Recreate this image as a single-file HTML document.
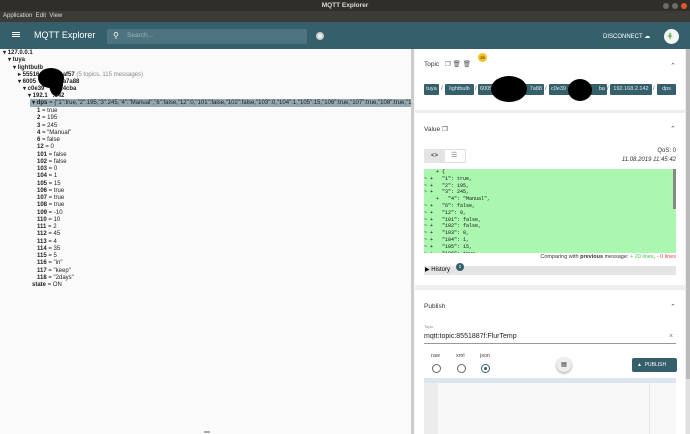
<!DOCTYPE html><html><head><style>
*{margin:0;padding:0;box-sizing:border-box}
body{width:690px;height:434px;overflow:hidden;font-family:"Liberation Sans",sans-serif;background:#fafafa;position:relative}
.a{position:absolute}
.tree div{position:absolute;font-size:6px;color:#222;white-space:nowrap;line-height:7px}
.tree b{font-weight:bold}
.chip{position:absolute;top:84px;height:11px;background:#35606b;color:#dfe8ea;font-size:5.5px;line-height:11px;text-align:center;border-radius:1px;white-space:nowrap;overflow:hidden}
.sep{position:absolute;top:86px;font-size:6px;color:#555}
.diff div{font-family:"Liberation Mono",monospace;font-size:5px;line-height:6.8px;color:#111;white-space:pre;height:6.8px}
</style></head><body>
<div class="a" style="left:0;top:0;width:690px;height:11px;background:#2f2e2b"></div>
<div class="a" style="left:0;top:2px;width:690px;text-align:center;font-size:6.5px;font-weight:bold;color:#dddad5">MQTT Explorer</div>
<div class="a" style="left:663px;top:3px;width:6px;height:6px;border-radius:50%;background:#6d6b66"></div>
<div class="a" style="left:672px;top:3px;width:6px;height:6px;border-radius:50%;background:#6d6b66"></div>
<div class="a" style="left:681px;top:3px;width:6px;height:6px;border-radius:50%;background:#e0562a"></div>
<div class="a" style="left:0;top:11px;width:690px;height:11px;background:#3c3b37"></div>
<div class="a" style="left:3px;top:13px;font-size:6px;color:#ddd">Application&nbsp; Edit&nbsp; View</div>
<div class="a" style="left:0;top:22px;width:690px;height:27px;background:#35606b"></div>
<div class="a" style="left:12px;top:32px;width:8px;height:1px;background:#fff;box-shadow:0 2px 0 #fff,0 4px 0 #fff"></div>
<div class="a" style="left:34px;top:30px;font-size:9px;color:#fff">MQTT Explorer</div>
<div class="a" style="left:107px;top:29px;width:200px;height:15px;background:#4d747e;border-radius:2px"></div>
<div class="a" style="left:113px;top:31px;font-size:8px;color:#fff">&#9906;</div>
<div class="a" style="left:127px;top:32px;font-size:6.5px;color:#9db3b9">Search...</div>
<div class="a" style="left:316px;top:32px;width:8px;height:8px;border-radius:50%;background:#eee;border:2px solid #ccc"></div>
<div class="a" style="left:603px;top:33px;font-size:6px;color:#fff">DISCONNECT &#9729;</div>
<div class="a" style="left:664px;top:29px;width:15px;height:15px;border-radius:50%;background:#f5f5f5"></div>
<div class="a" style="left:667px;top:32px;font-size:7px;color:#3a3">&#8917;</div>
<div class="a" style="left:411px;top:49px;width:3px;height:385px;background:#ccc"></div>
<div class="a" style="left:30px;top:99px;width:381px;height:8px;background:#94a9b1"></div>
<div class="tree">
<div style="left:3px;top:50px"><b>▾ 127.0.0.1</b></div>
<div style="left:8px;top:57px"><b>▾ tuya</b></div>
<div style="left:13px;top:65px"><b>▾ lightbulb</b></div>
<div style="left:18px;top:72px"><b>▸ 55516</b>&nbsp;&nbsp;&nbsp;&nbsp;&nbsp;&nbsp;&nbsp;&nbsp;&nbsp;&nbsp;<b>2eaf57</b> <span style="color:#888">(5 topics, 115 messages)</span></div>
<div style="left:18px;top:79px"><b>▾ 6005</b>&nbsp;&nbsp;&nbsp;&nbsp;&nbsp;&nbsp;&nbsp;&nbsp;&nbsp;&nbsp;<b>e31a7a88</b></div>
<div style="left:23px;top:86px"><b>▾ c0e39</b>&nbsp;&nbsp;&nbsp;&nbsp;&nbsp;&nbsp;&nbsp;<b>824cba</b></div>
<div style="left:28px;top:93px"><b>▾ 192.1</b>&nbsp;&nbsp;&nbsp;<b>.142</b></div>
<div style="left:32px;top:100px"><b>▾ dps</b> = {"1":true,"2":195,"3":245,"4":"Manual","6":false,"12":0,"101":false,"102":false,"103":0,"104":1,"105":15,"106":true,"107":true,"108":true,"1</div>
</div>
<div class="tree" id="kv"></div>
<div class="a" style="left:38px;top:68px;width:26px;height:20px;border-radius:50%;background:#000"></div>
<div class="a" style="left:49px;top:70px;width:14px;height:26px;border-radius:50%;background:#000"></div>
<div class="a" style="left:415px;top:49px;width:275px;height:385px;background:#eee"></div>
<div class="a" style="left:415px;top:49px;width:270px;height:61px;background:#fff"></div>
<div class="a" style="left:424px;top:61px;font-size:6.5px;color:#333">Topic</div>
<div class="a" style="left:445px;top:60px;font-size:6.5px;color:#555">&#10064; &#128465; &#128465;</div>
<div class="a" style="left:478px;top:53px;width:9px;height:9px;border-radius:50%;background:#f6bf26;font-size:4px;text-align:center;line-height:9px">25</div>
<div class="a" style="left:670px;top:62px;font-size:7px;color:#555">&#8963;</div>
<div class="chip" style="left:424px;width:15px">tuya</div><div class="sep" style="left:441px">/</div>
<div class="chip" style="left:445px;width:29px">lightbulb</div><div class="sep" style="left:475px">/</div>
<div class="chip" style="left:478px;width:66px;text-align:left;padding-left:2px">6005<span style="position:absolute;right:2px">7a88</span></div><div class="sep" style="left:545px">/</div>
<div class="chip" style="left:549px;width:58px;text-align:left;padding-left:2px">c0e39<span style="position:absolute;right:2px">ba</span></div><div class="sep" style="left:607px">/</div>
<div class="chip" style="left:610px;width:42px">192.168.2.142</div><div class="sep" style="left:653px">/</div>
<div class="chip" style="left:657px;width:19px">dps</div>
<div class="a" style="left:491px;top:76px;width:36px;height:26px;border-radius:50%;background:#000"></div>
<div class="a" style="left:568px;top:79px;width:24px;height:22px;border-radius:50%;background:#000"></div>
<div class="a" style="left:415px;top:113px;width:270px;height:172px;background:#fff"></div>
<div class="a" style="left:424px;top:125px;font-size:6.5px;color:#333">Value &#10064;</div>
<div class="a" style="left:670px;top:125px;font-size:7px;color:#555">&#8963;</div>
<div class="a" style="left:424px;top:149px;width:42px;height:14px;border:1px solid #ddd;border-radius:2px"></div>
<div class="a" style="left:424px;top:149px;width:21px;height:14px;background:#e4e4e4;font-size:6px;text-align:center;line-height:14px">&lt;&gt;</div>
<div class="a" style="left:451px;top:149px;font-size:7px;color:#777;line-height:14px">&#9776;</div>
<div class="a" style="left:600px;top:148px;width:76px;text-align:right;font-size:6px;color:#333">QoS: 0</div>
<div class="a" style="left:580px;top:157px;width:96px;text-align:right;font-size:6px;color:#333;font-style:italic">11.08.2019 11:45:42</div>
<div class="a diff" style="left:424px;top:169px;width:252px;height:84px;background:#abf7b0;overflow:hidden">
<div>    + {</div><div>~ +   "1": true,</div><div>~ +   "2": 195,</div><div>~ +   "3": 245,</div><div>    +   "4": "Manual",</div><div>~ +   "6": false,</div><div>~ +   "12": 0,</div><div>~ +   "101": false,</div><div>~ +   "102": false,</div><div>~ +   "103": 0,</div><div>~ +   "104": 1,</div><div>~ +   "105": 15,</div><div>~ +   "106": true,</div>
</div>
<div class="a" style="left:673px;top:169px;width:3px;height:40px;background:#888"></div>
<div class="a" style="left:480px;top:254px;width:196px;text-align:right;font-size:5.5px;color:#333">Comparing with <b>previous</b> message: <span style="color:#4c4">+ 20 lines</span>, <span style="color:#e44">- 0 lines</span></div>
<div class="a" style="left:424px;top:266px;width:252px;height:9px;background:#e4e4e4;font-size:6px;line-height:9px;padding-left:1px">▶ History</div>
<div class="a" style="left:456px;top:263px;width:8px;height:8px;border-radius:50%;background:#35606b;color:#fff;font-size:4.5px;text-align:center;line-height:8px">2</div>
<div class="a" style="left:415px;top:290px;width:270px;height:144px;background:#fff"></div>
<div class="a" style="left:424px;top:303px;font-size:6.5px;color:#333">Publish</div>
<div class="a" style="left:670px;top:303px;font-size:7px;color:#555">&#8963;</div>
<div class="a" style="left:424px;top:324px;font-size:4px;color:#888">Topic</div>
<div class="a" style="left:424px;top:333px;font-size:7px;color:#222">mqtt:topic:8551887f:FlurTemp</div>
<div class="a" style="left:669px;top:333px;font-size:7px;color:#777">×</div>
<div class="a" style="left:424px;top:343px;width:252px;height:1px;background:#999"></div>
<div class="a" style="left:431px;top:353px;font-size:5.5px;color:#444">raw</div>
<div class="a" style="left:456px;top:353px;font-size:5.5px;color:#444">xml</div>
<div class="a" style="left:480px;top:353px;font-size:5.5px;color:#444">json</div>
<div class="a" style="left:432px;top:364px;width:9px;height:9px;border-radius:50%;border:1px solid #666"></div>
<div class="a" style="left:457px;top:364px;width:9px;height:9px;border-radius:50%;border:1px solid #666"></div>
<div class="a" style="left:481px;top:364px;width:9px;height:9px;border-radius:50%;border:1px solid #35606b"></div>
<div class="a" style="left:484px;top:367px;width:3px;height:3px;border-radius:50%;background:#35606b"></div>
<div class="a" style="left:557px;top:358px;width:14px;height:14px;border-radius:50%;background:#eee;box-shadow:0 1px 3px #999;font-size:6px;text-align:center;line-height:14px">&#9636;</div>
<div class="a" style="left:632px;top:358px;width:45px;height:14px;background:#35606b;border-radius:2px;color:#fff;font-size:5px;line-height:14px;padding-left:5px">▲ &nbsp;PUBLISH</div>
<div class="a" style="left:424px;top:378px;width:252px;height:56px;background:#f8f8f8"></div>
<div class="a" style="left:424px;top:378px;width:14px;height:56px;background:#ececec"></div>
<div class="a" style="left:424px;top:378px;width:252px;height:5px;background:#dde6ef"></div>
<div class="a" style="left:649px;top:378px;width:1px;height:56px;background:#e4e4e4"></div>
<div class="a" style="left:686px;top:49px;width:4px;height:385px;background:#e0e0e0"></div>
<div class="a" style="left:686px;top:49px;width:4px;height:330px;background:#bbb"></div>
<div class="a" style="left:204px;top:431px;width:6px;height:2px;background:#aaa"></div>
<script>
var kv=[["1","true"],["2","195"],["3","245"],["4","\"Manual\""],["6","false"],["12","0"],["101","false"],["102","false"],["103","0"],["104","1"],["105","15"],["106","true"],["107","true"],["108","true"],["109","-10"],["110","10"],["111","2"],["112","45"],["113","4"],["114","35"],["115","5"],["116","\"in\""],["117","\"keep\""],["118","\"2days\""]];
var h="";kv.forEach(function(p,i){h+='<div style="left:37px;top:'+(108+i*7.25)+'px"><b>'+p[0]+'</b> = '+p[1].replace(/"/g,'&quot;')+'</div>';});
h+='<div style="left:32px;top:'+(108+24*7.25)+'px"><b>state</b> = ON</div>';
document.getElementById("kv").innerHTML=h;
</script>
</body></html>
